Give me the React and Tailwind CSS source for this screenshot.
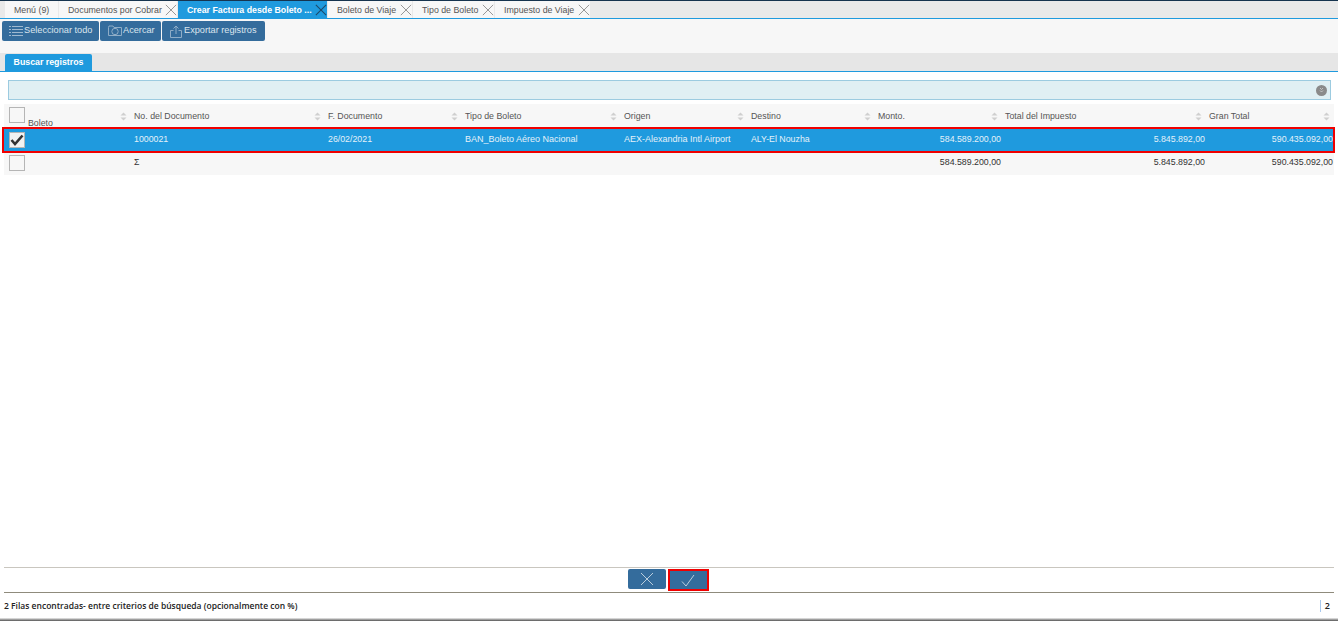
const cols = "grid grid-cols-[127px_194px_137px_159px_127px_127px_127px_204px_128px]";

function X({ size = 14, color = "#777", sw = 1 }) {
  return (
    <svg width={size} height={size} viewBox="0 0 14 14" className="shrink-0">
      <path d="M1 1 L13 13 M13 1 L1 13" stroke={color} strokeWidth={sw} fill="none" />
    </svg>
  );
}

function Sort() {
  return (
    <svg width="7" height="9" viewBox="0 0 7 9" className="shrink-0">
      <path d="M3.5 0.5 L6.5 3.5 L0.5 3.5 Z" fill="#cfcfcf" />
      <path d="M3.5 8.5 L6.5 5.5 L0.5 5.5 Z" fill="#cfcfcf" />
    </svg>
  );
}

function Tab({ label, w, active, close = true }) {
  return (
    <div className={`flex items-center h-[17px] mr-[1px] pl-[9px] ${w} ${active ? "bg-[#1f9ade] text-white font-bold" : "bg-[#f7f7f7] text-[#555]"}`}>
      <span className="flex-1 whitespace-nowrap">{label}</span>
      {close && <X size={12} color={active ? "#1c4a6b" : "#888"} sw={active ? 1.3 : 1} />}
    </div>
  );
}

function ToolBtn({ icon, label, w }) {
  return (
    <div className={`flex items-center h-[20px] rounded-[2px] bg-[#346c9c] text-[#dbe5ee] text-[9.2px] ${w}`}>
      {icon}
      <span className="whitespace-nowrap pb-[2px]">{label}</span>
    </div>
  );
}

function Head({ label }) {
  return (
    <div className="flex items-center justify-between pl-[3px] pr-[4px] text-[#555]">
      <span className="whitespace-nowrap">{label}</span>
      <Sort />
    </div>
  );
}

function Box({ checked }) {
  return (
    <div className={`w-[16px] h-[16px] border border-[#b5b5b5] flex items-center justify-center ${checked ? "bg-[#f2f2f2]" : "bg-[#f7f7f7]"}`}>
      {checked && (
        <svg width="14" height="12" viewBox="0 0 14 12">
          <path d="M1.5 6 L5 10 L12.5 1.5" stroke="#333" strokeWidth="2.6" fill="none" />
        </svg>
      )}
    </div>
  );
}

function Cell({ children, right, lift }) {
  return <div className={`px-[3px] whitespace-nowrap ${lift} ${right ? "text-right pr-[1px]" : ""}`}>{children}</div>;
}

export default function App() {
  return (
    <div className="w-[1338px] h-[621px] bg-white flex flex-col overflow-hidden text-[8.8px] leading-[12px] font-['Liberation_Sans',sans-serif]">
      <div className="h-[1px] bg-[#16344f]" />
      <div className="h-[18px] flex pl-[5px] bg-[#e9e9e9] border-b border-[#1f9ade]">
        <Tab label="Menú (9)" w="w-[53px]" close={false} />
        <Tab label="Documentos por Cobrar" w="w-[118px]" />
        <Tab label="Crear Factura desde Boleto ..." w="w-[149px]" active />
        <Tab label="Boleto de Viaje" w="w-[84px]" />
        <Tab label="Tipo de Boleto" w="w-[81px]" />
        <Tab label="Impuesto de Viaje" w="w-[95px]" />
      </div>
      <div className="h-[34px] bg-[#f7f7f7] flex items-start gap-[1px] pt-[2px] pl-[2px]">
        <ToolBtn w="w-[97px]" label="Seleccionar todo" icon={
          <svg width="14" height="12" viewBox="0 0 14 12" className="ml-[7px] mr-[1px]">
            <path d="M0 1.5h2M3 1.5h11M0 4.5h2M3 4.5h11M0 7.5h2M3 7.5h11M0 10.5h2M3 10.5h11" stroke="#9fb9d0" strokeWidth="1" />
          </svg>} />
        <ToolBtn w="w-[61px]" label="Acercar" icon={
          <svg width="14" height="12" viewBox="0 0 14 12" className="ml-[8px] mr-[1px]">
            <path d="M0.5 2.5 V10.5 H13.5 V2.5 H6 L5 1 H1 Z" stroke="#8fadc7" fill="none" />
            <circle cx="7" cy="6.5" r="3.2" stroke="#8fadc7" fill="none" />
          </svg>} />
        <ToolBtn w="w-[103px]" label="Exportar registros" icon={
          <svg width="12" height="13" viewBox="0 0 12 13" className="ml-[8px] mr-[2px]">
            <path d="M3.5 5.5 H0.5 V12.5 H11.5 V5.5 H8.5 M6 9 V1 M3.5 3.5 L6 1 L8.5 3.5" stroke="#8fadc7" fill="none" />
          </svg>} />
      </div>
      <div className="h-[19px] bg-[#e6e6e6] border-b border-[#1f9ade] pl-[5px] pt-[1px]">
        <div className="w-[87px] h-[17px] pb-[1px] bg-[#1f9ade] text-white font-bold flex items-center justify-center rounded-t-[2px]">Buscar registros</div>
      </div>
      <div className="mx-[8px] w-[1323px] mt-[8px] h-[20px] bg-[#e0eff3] border border-[#9ccbe0] flex items-center justify-end pr-[3px]">
        <div className="w-[11px] h-[11px] rounded-full bg-[#8a8a8a] flex items-center justify-center">
          <svg width="5" height="6" viewBox="0 0 5 6"><path d="M1 1 L2.5 2.5 L4 1 M1 3.5 L2.5 5 L4 3.5" stroke="#ddd" strokeWidth="0.7" fill="none" /></svg>
        </div>
      </div>
      <div className="mx-[4px] mt-[4px] w-[1330px]">
        <div className={`${cols} h-[24px] bg-[#f7f7f7] items-center`}>
          <div className="relative h-full flex items-center justify-between pl-[5px] pr-[4px]">
            <div className="mt-[-2px]"><Box /></div>
            <span className="absolute left-[24px] top-[13px] text-[#555]">Boleto</span>
            <Sort />
          </div>
          <Head label="No. del Documento" />
          <Head label="F. Documento" />
          <Head label="Tipo de Boleto" />
          <Head label="Origen" />
          <Head label="Destino" />
          <Head label="Monto." />
          <Head label="Total del Impuesto" />
          <Head label="Gran Total" />
        </div>
        <div className={`${cols} h-[24px] bg-[#1f9ade] items-center text-[#e4f1f9] relative`}>
          <div className="absolute -left-[2px] -right-[1px] -top-[1px] -bottom-[1px] border-2 border-[#f00000]" />
          <div className="pl-[5px]"><Box checked /></div>
          <Cell lift="pb-[2px]">1000021</Cell>
          <Cell lift="pb-[2px]">26/02/2021</Cell>
          <Cell lift="pb-[2px] text-[9px]">BAN_Boleto Aéreo Nacional</Cell>
          <Cell lift="pb-[2px] text-[9px]">AEX-Alexandria Intl Airport</Cell>
          <Cell lift="pb-[2px]">ALY-El Nouzha</Cell>
          <Cell lift="pb-[2px]" right>584.589.200,00</Cell>
          <Cell lift="pb-[2px]" right>5.845.892,00</Cell>
          <Cell lift="pb-[2px]" right>590.435.092,00</Cell>
        </div>
        <div className={`${cols} h-[23px] bg-[#f7f7f7] items-center text-[#333]`}>
          <div className="pl-[5px] pb-[1px]"><Box /></div>
          <Cell lift="pb-[4px]">Σ</Cell>
          <Cell />
          <Cell />
          <Cell />
          <Cell />
          <Cell lift="pb-[4px]" right>584.589.200,00</Cell>
          <Cell lift="pb-[4px]" right>5.845.892,00</Cell>
          <Cell lift="pb-[4px]" right>590.435.092,00</Cell>
        </div>
      </div>
      <div className="flex-1" />
      <div className="mx-[4px] w-[1330px] h-[26px] border-t border-b border-t-[#c9c6bf] border-b-[#8f8b7c] flex items-start justify-center pr-[2px] pt-[1px] gap-[2px]">
        <div className="w-[38px] h-[20px] bg-[#346c9c] rounded-[2px] flex items-center justify-center">
          <X size={14} color="#b9cddd" />
        </div>
        <div className="w-[41px] h-[22px] bg-[#346c9c] border-2 border-[#f00000] flex items-center justify-center">
          <svg width="14" height="13" viewBox="0 0 14 13"><path d="M1 7.5 L5 12 L13 1" stroke="#b9cddd" fill="none" /></svg>
        </div>
      </div>
      <div className="h-[25px] flex items-center justify-between pl-[4px] pr-[8px] font-semibold text-[8.5px] text-[#222] font-['Open_Sans',sans-serif]">
        <span>2 Filas encontradas- entre criterios de búsqueda (opcionalmente con %)</span>
        <span className="border-l border-[#a9c9ef] pl-[4px] h-[12px] flex items-center text-[9px]">2</span>
      </div>
      <div className="h-[3px] bg-gradient-to-b from-[#f0f0f0] to-[#555]" />
    </div>
  );
}
